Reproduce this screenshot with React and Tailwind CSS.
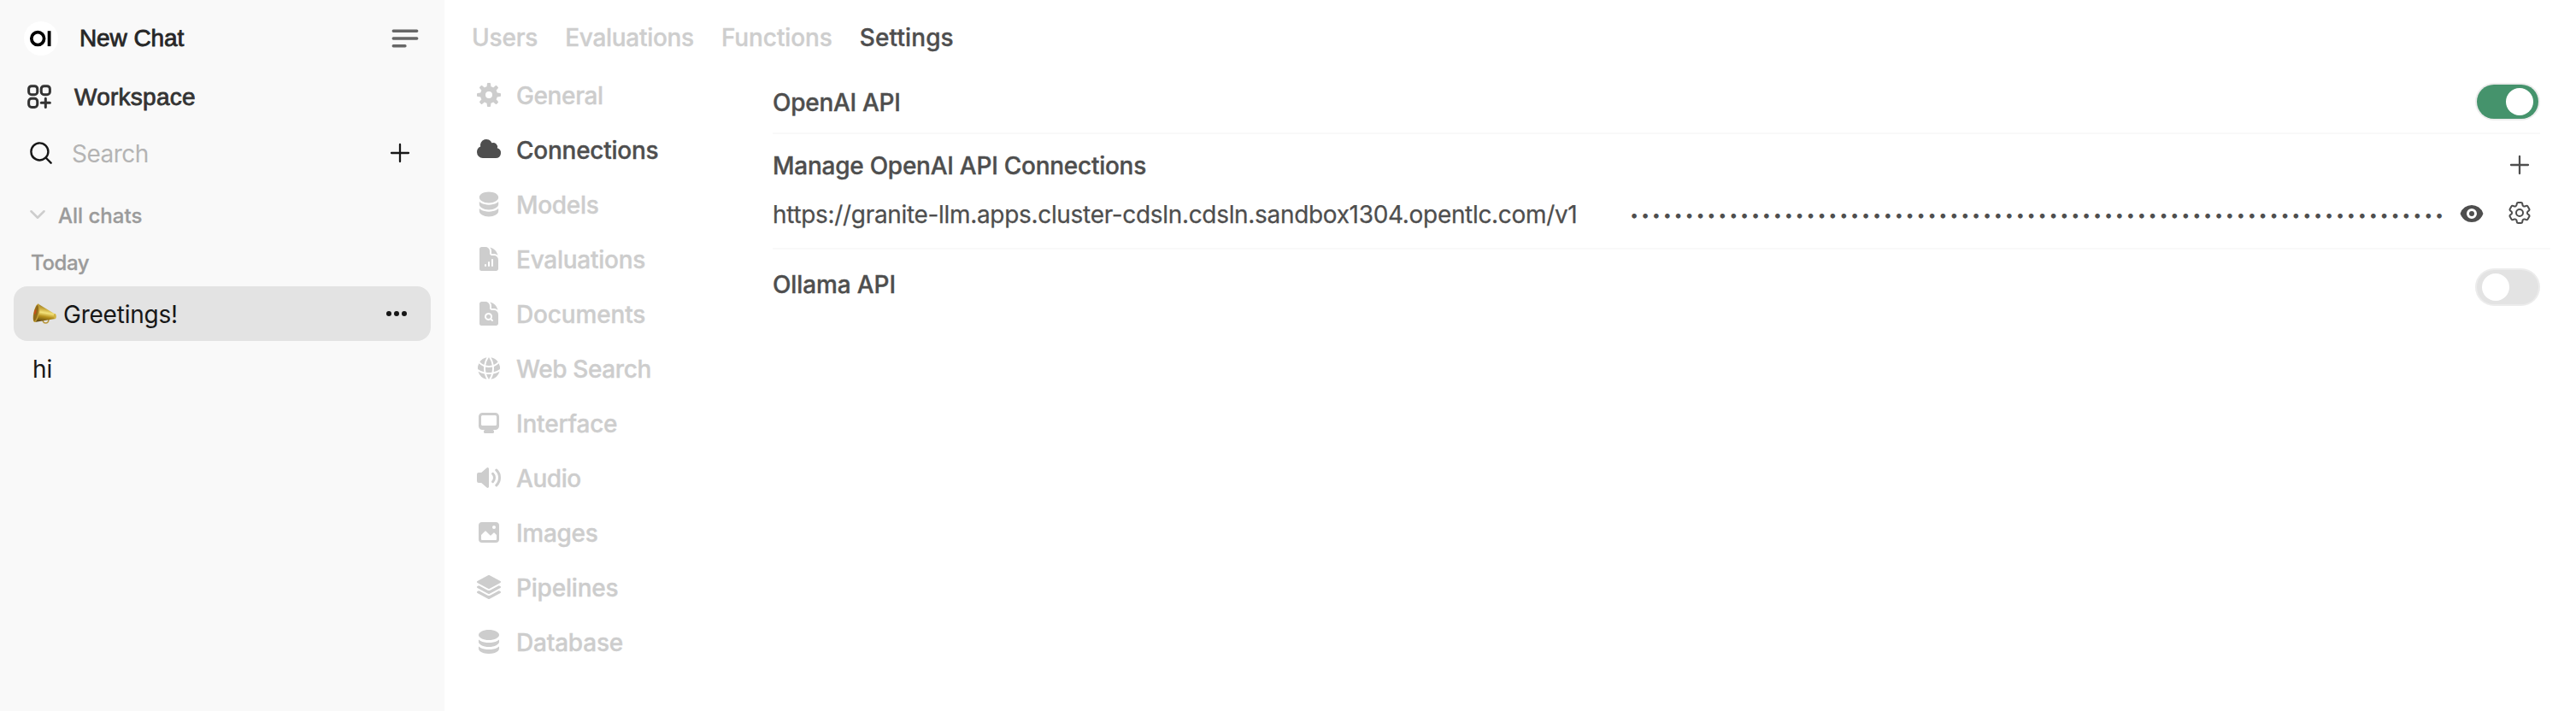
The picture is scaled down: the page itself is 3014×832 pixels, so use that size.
import {
  HiDocumentChartBar,
  HiDocumentMagnifyingGlass,
  HiGlobeAlt,
  HiMiniCircleStack,
  HiMiniMagnifyingGlass,
  HiOutlineCog6Tooth,
  HiSquare3Stack3D,
} from 'react-icons/hi2';

function Micro({ paths }) {
  return (
    <svg viewBox="0 0 16 16" fill="currentColor" className="size-8">
      {paths.map((d) => (
        <path key={d} d={d} fillRule="evenodd" clipRule="evenodd" />
      ))}
    </svg>
  );
}

const COG = [
  'M6.955 1.45A.5.5 0 0 1 7.452 1h1.096a.5.5 0 0 1 .497.45l.17 1.699c.484.12.94.312 1.356.562l1.321-1.081a.5.5 0 0 1 .67.033l.774.775a.5.5 0 0 1 .034.67l-1.08 1.32c.25.417.44.873.561 1.357l1.699.17a.5.5 0 0 1 .45.497v1.096a.5.5 0 0 1-.45.497l-1.699.17c-.12.484-.312.94-.562 1.356l1.082 1.322a.5.5 0 0 1-.034.67l-.774.774a.5.5 0 0 1-.67.033l-1.322-1.08c-.416.25-.872.44-1.356.561l-.17 1.699a.5.5 0 0 1-.497.45H7.452a.5.5 0 0 1-.497-.45l-.17-1.699a4.973 4.973 0 0 1-1.356-.562L4.108 13.37a.5.5 0 0 1-.67-.033l-.774-.775a.5.5 0 0 1-.034-.67l1.08-1.32a4.971 4.971 0 0 1-.561-1.357l-1.699-.17A.5.5 0 0 1 1 8.548V7.452a.5.5 0 0 1 .45-.497l1.699-.17c.12-.484.312-.94.562-1.356L2.629 4.107a.5.5 0 0 1 .034-.67l.774-.774a.5.5 0 0 1 .67-.033L5.43 3.71a4.97 4.97 0 0 1 1.356-.561l.17-1.699ZM6 8a2 2 0 1 0 4 0 2 2 0 0 0-4 0Z',
];
const CLOUD = [
  'M1 9.5A3.5 3.5 0 0 0 4.5 13H12a3 3 0 0 0 .917-5.857 2.503 2.503 0 0 0-3.198-3.019 3.5 3.5 0 0 0-6.628 2.171A3.5 3.5 0 0 0 1 9.5Z',
];
const DESKTOP = [
  'M2 4.25A2.25 2.25 0 0 1 4.25 2h7.5A2.25 2.25 0 0 1 14 4.25v5.5A2.25 2.25 0 0 1 11.75 12h-1.312c.1.128.21.248.328.36a.75.75 0 0 1 .234.545v.345a.75.75 0 0 1-.75.75h-4.5a.75.75 0 0 1-.75-.75v-.345a.75.75 0 0 1 .234-.545c.118-.111.228-.232.328-.36H4.25A2.25 2.25 0 0 1 2 9.75v-5.5Zm2.25-.75a.75.75 0 0 0-.75.75v4.5c0 .414.336.75.75.75h7.5a.75.75 0 0 0 .75-.75v-4.5a.75.75 0 0 0-.75-.75h-7.5Z',
];
const SPEAKER = [
  'M7.557 2.066A.75.75 0 0 1 8 2.75v10.5a.75.75 0 0 1-1.248.56L3.59 11H2a1 1 0 0 1-1-1V6a1 1 0 0 1 1-1h1.59l3.162-2.81a.75.75 0 0 1 .805-.124ZM12.95 3.05a.75.75 0 1 0-1.06 1.06 5.5 5.5 0 0 1 0 7.78.75.75 0 1 0 1.06 1.06 7 7 0 0 0 0-9.9Z',
  'M10.828 5.172a.75.75 0 1 0-1.06 1.06 2.5 2.5 0 0 1 0 3.536.75.75 0 1 0 1.06 1.06 4 4 0 0 0 0-5.656Z',
];
const PHOTO = [
  'M2 4a2 2 0 0 1 2-2h8a2 2 0 0 1 2 2v8a2 2 0 0 1-2 2H4a2 2 0 0 1-2-2V4Zm10.5 5.707a.5.5 0 0 0-.146-.353l-1-1a.5.5 0 0 0-.708 0L9.354 9.646a.5.5 0 0 1-.708 0L6.354 7.354a.5.5 0 0 0-.708 0l-2 2a.5.5 0 0 0-.146.353V12a.5.5 0 0 0 .5.5h8a.5.5 0 0 0 .5-.5V9.707ZM12 5a1 1 0 1 1-2 0 1 1 0 0 1 2 0Z',
];
const STACK = [
  'M8 7c3.314 0 6-1.343 6-3s-2.686-3-6-3-6 1.343-6 3 2.686 3 6 3Z',
  'M8 8.5c1.84 0 3.579-.37 4.914-1.037A6.33 6.33 0 0 0 14 6.78V8c0 1.657-2.686 3-6 3S2 9.657 2 8V6.78c.346.273.72.5 1.087.683C4.42 8.131 6.16 8.5 8 8.5Z',
  'M8 12.5c1.84 0 3.579-.37 4.914-1.037.366-.183.74-.41 1.086-.684V12c0 1.657-2.686 3-6 3s-6-1.343-6-3v-1.22c.346.273.72.5 1.087.683C4.42 12.131 6.16 12.5 8 12.5Z',
];
const EYE = [
  'M8 9.5a1.5 1.5 0 1 0 0-3 1.5 1.5 0 0 0 0 3Z',
  'M1.38 8.28a.87.87 0 0 1 0-.566 7.003 7.003 0 0 1 13.238.006.87.87 0 0 1 0 .566A7.003 7.003 0 0 1 1.379 8.28ZM11 8a3 3 0 1 1-6 0 3 3 0 0 1 6 0Z',
];

function PlusIcon() {
  return (
    <svg viewBox="0 0 24 24" fill="none" stroke="currentColor" strokeWidth="1.7" strokeLinecap="round" strokeLinejoin="round" className="size-8">
      <path d="M12 4.5v15m7.5-7.5h-15" />
    </svg>
  );
}

function Logo() {
  return (
    <svg viewBox="0 0 40 40" className="size-10">
      <circle cx="20" cy="20" r="20" fill="#fff" />
      <circle cx="16.2" cy="20.1" r="7.4" fill="none" stroke="#000" strokeWidth="3.7" />
      <rect x="27.7" y="11.2" width="3.8" height="17.9" fill="#000" />
    </svg>
  );
}

function Megaphone() {
  return (
    <svg viewBox="0 0 28 24" className="h-6 w-7">
      <defs>
        <linearGradient id="brass" x1="0.6" y1="0" x2="0.4" y2="1">
          <stop offset="0" stopColor="#7d6420" />
          <stop offset="0.3" stopColor="#c9a83a" />
          <stop offset="0.5" stopColor="#f3e27a" />
          <stop offset="0.7" stopColor="#b8921d" />
          <stop offset="1" stopColor="#5e4710" />
        </linearGradient>
      </defs>
      <path d="M12 19c.2 5.400 6.600 5.400 7 0" fill="none" stroke="#b9973a" strokeWidth="1.6" />
      <path d="M6.500.4 25.500 12c1.600.3 2.400 1.500 2.200 3.200-.1 1.800-.9 3-2.400 3L2.500 22Z" fill="url(#brass)" />
      <ellipse cx="4.600" cy="11.300" rx="3.300" ry="11" transform="rotate(12 4.600 11.300)" fill="#c2a03a" />
      <ellipse cx="4" cy="11.400" rx="2.300" ry="9.600" transform="rotate(12 4 11.400)" fill="#8f6a1c" />
      <ellipse cx="3.200" cy="10" rx="1.200" ry="3" transform="rotate(12 3.200 10)" fill="#c4501c" />
      <ellipse cx="26.200" cy="15.200" rx="1.300" ry="3.100" fill="#d0b244" />
    </svg>
  );
}

const TABS = [
  ['Users', 'tracking-[-0.2px]'],
  ['Evaluations', 'tracking-[-0.29px]'],
  ['Functions', 'tracking-[-0.1px]'],
  ['Settings', 'tracking-[0.1px] text-[#4e4e4e]'],
];

const NAV = [
  ['General', <Micro paths={COG} />, 'tracking-[-0.38px]'],
  ['Connections', <Micro paths={CLOUD} />, 'tracking-[-0.25px]'],
  ['Models', <HiMiniCircleStack className="size-8" />, 'tracking-[-0.3px]'],
  ['Evaluations', <HiDocumentChartBar className="size-8" />, 'tracking-[-0.25px]'],
  ['Documents', <HiDocumentMagnifyingGlass className="size-8" />, 'tracking-[-0.16px]'],
  ['Web Search', <HiGlobeAlt className="size-8" />, 'tracking-[-0.4px]'],
  ['Interface', <Micro paths={DESKTOP} />, 'tracking-[-0.2px]'],
  ['Audio', <Micro paths={SPEAKER} />, 'tracking-[-0.45px]'],
  ['Images', <Micro paths={PHOTO} />, 'tracking-[-0.3px]'],
  ['Pipelines', <HiSquare3Stack3D className="size-8" />, 'tracking-[-0.2px]'],
  ['Database', <Micro paths={STACK} />, 'tracking-[-0.2px]'],
];

function Sidebar() {
  return (
    <aside className="flex w-[520px] shrink-0 flex-col bg-[#f9f9f9] text-[#171717]">
      <div className="mt-[11px] flex h-[68px] items-center pr-[26px] pl-7 font-['Liberation_Sans',sans-serif] text-[#262626]">
        <Logo />
        <span className="ml-[25px] grow tracking-[-0.1px] [-webkit-text-stroke:0.8px_#262626]">New Chat</span>
        <svg viewBox="0 0 24 24" fill="none" stroke="#676767" strokeWidth="2" strokeLinecap="round" className="size-10">
          <path d="M3.750 6.750h16.500M3.750 12h16.500M3.750 17.250H12" />
        </svg>
      </div>
      <div className="flex h-[67px] items-center pl-7 font-['Liberation_Sans',sans-serif] text-[#333333]">
        <svg viewBox="0 0 24 24" fill="none" stroke="currentColor" strokeWidth="2" strokeLinecap="round" strokeLinejoin="round" className="size-9">
          <path d="M13.5 16.875h3.375m0 0h3.375m-3.375 0V13.5m0 3.375v3.375M6 10.5h2.25a2.25 2.25 0 0 0 2.25-2.25V6a2.25 2.25 0 0 0-2.25-2.25H6A2.25 2.25 0 0 0 3.75 6v2.25A2.25 2.25 0 0 0 6 10.5Zm0 9.75h2.25A2.25 2.25 0 0 0 10.5 18v-2.25a2.25 2.25 0 0 0-2.25-2.25H6a2.25 2.25 0 0 0-2.25 2.25V18A2.25 2.25 0 0 0 6 20.25Zm9.750-9.750H18a2.25 2.25 0 0 0 2.250-2.250V6A2.25 2.25 0 0 0 18 3.75h-2.25A2.25 2.25 0 0 0 13.5 6v2.25a2.25 2.25 0 0 0 2.25 2.25Z" />
        </svg>
        <span className="ml-[23px] pt-0.5 tracking-[0.26px] [-webkit-text-stroke:0.8px_#333333]">Workspace</span>
      </div>
      <div className="flex h-[66px] items-center pr-9 pl-8">
        <HiMiniMagnifyingGlass className="size-8" />
        <span className="ml-5 grow pt-0.5 tracking-[-0.54px] text-[#b4b4b4]">Search</span>
        <PlusIcon />
      </div>
      <div className="flex h-[78px] items-center pl-8 text-2xl font-medium text-[#9b9b9b] [-webkit-text-stroke:0.3px]">
        <svg viewBox="0 0 24 24" fill="none" stroke="#cdcdcd" strokeWidth="2.5" strokeLinecap="round" strokeLinejoin="round" className="size-6">
          <path d="m19.500 8.250-7.500 7.500-7.500-7.500" />
        </svg>
        <span className="ml-3 pt-[3px]">All chats</span>
      </div>
      <div className="flex h-[45px] items-center pb-[9px] pl-9 text-2xl font-medium tracking-[-0.4px] text-[#9b9b9b] [-webkit-text-stroke:0.3px]">Today</div>
      <div className="mx-4 flex h-16 items-center rounded-2xl bg-[#e3e3e3] pr-7 pl-[22px]">
        <Megaphone />
        <span className="ml-2 grow pt-0.5 tracking-[-0.23px]">Greetings!</span>
        <svg viewBox="0 0 24 6" fill="currentColor" className="h-1.5 w-6">
          <circle cx="3" cy="3" r="3" />
          <circle cx="12" cy="3" r="3" />
          <circle cx="21" cy="3" r="3" />
        </svg>
      </div>
      <div className="flex h-16 items-center pt-0.5 pl-[38px]">hi</div>
    </aside>
  );
}

function Toggle({ on }) {
  return (
    <span
      className={
        on
          ? 'mr-0.5 flex h-10 w-[72px] items-center justify-end rounded-full bg-[#45936c] px-1.5 ring-2 ring-[#ececec]'
          : 'mr-0.5 flex h-10 w-[72px] items-center rounded-full bg-[#e3e3e3] px-1.5 ring-2 ring-[#ececec]'
      }
    >
      <span className="size-8 rounded-full bg-white" />
    </span>
  );
}

export default function App() {
  return (
    <div className="flex h-[832px] w-[3014px] overflow-hidden bg-white font-[Inter,sans-serif] text-[28px] leading-9 whitespace-nowrap">
      <Sidebar />
      <div className="flex grow flex-col">
        <nav className="flex h-[79px] items-center gap-8 pt-[18px] pb-[9px] pl-8 font-medium text-[#cecece] [-webkit-text-stroke:0.35px]">
          {TABS.map(([label, cls]) => (
            <span key={label} className={cls}>{label}</span>
          ))}
        </nav>
        <div className="flex grow">
          <div className="w-[384px] shrink-0 pl-9 font-medium text-[#cdcdcd] [-webkit-text-stroke:0.35px]">
            {NAV.map(([label, icon, tracking]) => (
              <div key={label} className={label === 'Connections' ? 'flex h-16 items-center gap-4 text-[#4e4e4e]' : 'flex h-16 items-center gap-4'}>
                {icon}
                <span className={`pt-0.5 ${tracking}`}>{label}</span>
              </div>
            ))}
          </div>
          <main className="flex w-[2080px] flex-col text-[#4e4e4e]">
            <div className="mr-3 flex h-[78px] items-center justify-between border-b-2 border-[#f9f9f9] pt-1 font-medium">
              <span className="pt-0.5 tracking-[-0.28px] [-webkit-text-stroke:0.35px]">OpenAI API</span>
              <Toggle on />
            </div>
            <div className="flex h-[72px] items-center justify-between pr-5 font-medium">
              <span className="pt-0.5 tracking-[-0.26px] [-webkit-text-stroke:0.35px]">Manage OpenAI API Connections</span>
              <PlusIcon />
            </div>
            <div className="flex h-[63px] items-start border-b-2 border-[#f9f9f9] pr-5">
              <div className="flex h-[42px] grow items-center">
                <span className="w-[1003px] pt-px tracking-[-0.32px] [-webkit-text-stroke:0.25px]">https://granite-llm.apps.cluster-cdsln.cdsln.sandbox1304.opentlc.com/v1</span>
                <span className="grow pt-1 text-[18px] tracking-[2.78px]">{'•'.repeat(74)}</span>
                <Micro paths={EYE} />
                <HiOutlineCog6Tooth className="mb-0.5 ml-6 size-8" />
              </div>
            </div>
            <div className="mr-3 flex h-[88px] items-center justify-between font-medium">
              <span className="pb-[7px] tracking-[-0.12px] [-webkit-text-stroke:0.35px]">Ollama API</span>
              <Toggle />
            </div>
          </main>
        </div>
      </div>
    </div>
  );
}
